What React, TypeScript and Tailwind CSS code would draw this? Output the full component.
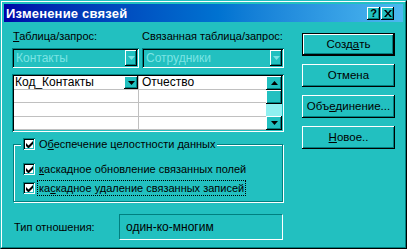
import React from 'react';

const raised =
  'shadow-[inset_-1px_-1px_0_#000,inset_1px_1px_0_#fff,inset_-2px_-2px_0_#008080,inset_2px_2px_0_#22c0c0]';
const sunken =
  'shadow-[inset_1px_1px_0_#008080,inset_-1px_-1px_0_#fff,inset_2px_2px_0_#000,inset_-2px_-2px_0_#22c0c0]';

function Arrow({ up = false, color = '#000' }: { up?: boolean; color?: string }) {
  return (
    <svg width="7" height="4" viewBox="0 0 7 4">
      <path d={up ? 'M3.5 0L7 4H0z' : 'M0 0h7L3.5 4z'} fill={color} />
    </svg>
  );
}

function Check() {
  return (
    <span className={`flex h-[12px] w-[12px] shrink-0 items-center justify-center bg-white ${sunken}`}>
      <svg width="7" height="7" viewBox="0 0 7 7">
        <path d="M0 2v3l2 2h1l4-4V0L2.5 4.5z" fill="#000" />
      </svg>
    </span>
  );
}

function Btn({ children, def = false }: { children: React.ReactNode; def?: boolean }) {
  return (
    <div className={def ? 'border border-black' : ''}>
      <div className={`flex items-center justify-center bg-[#22c0c0] ${raised} ${def ? 'h-[21px]' : 'h-[23px]'}`}>
        {children}
      </div>
    </div>
  );
}

export default function App() {
  const grid = [
    ['Код_Контакты', 'Отчество'],
    ['', ''],
    ['', ''],
    ['', ''],
  ];

  return (
    <div
      className="w-[407px] h-[249px] overflow-hidden bg-[#22c0c0] border-t border-l border-[#22c0c0] border-r border-b border-r-black border-b-black text-[11px] text-black"
      style={{ fontFamily: '"Liberation Sans", Arial, sans-serif' }}
    >
      <div className="h-full border-t border-l border-white border-r border-b border-r-[#008080] border-b-[#008080] p-[2px] flex flex-col">
        {/* title bar */}
        <div className="h-[18px] flex items-center bg-gradient-to-r from-[#0000a8] to-[#4cb8f0] pl-[2px] pr-[9px]">
          <span className="text-white font-bold text-[13px] tracking-[0.2px] leading-none">Изменение связей</span>
          <div className="ml-auto flex">
            <div className={`w-[13px] h-[13px] flex items-center justify-center bg-[#22c0c0] ${raised} text-[11px] font-bold leading-none`}>?</div>
            <div className={`ml-[1px] w-[13px] h-[13px] flex items-center justify-center bg-[#22c0c0] ${raised}`}>
              <svg width="8" height="7" viewBox="0 0 8 7">
                <path d="M0 0h2l2 2.5L6 0h2L5 3.5 8 7H6L4 4.5 2 7H0l3-3.5z" fill="#000" />
              </svg>
            </div>
          </div>
        </div>

        {/* body */}
        <div className="flex pl-[8px]">
          <div className="w-[272px] flex flex-col">
            <div className="mt-[8px] flex h-[13px] leading-[13px]">
              <span className="w-[130px] pl-[1px]"><u>Т</u>аблица/запрос:</span>
              <span>Связанная таблица/запрос:</span>
            </div>

            <div className="mt-[5px] flex h-[20px]">
              <div className={`w-[127px] flex items-center bg-[#22c0c0] ${sunken} pl-[4px] pr-[2px]`}>
                <span className="text-[#7ce4e4] text-[12px]">Контакты</span>
                <div className={`ml-auto w-[12px] h-[16px] flex items-center justify-center ${raised}`}>
                  <Arrow color="#7ce4e4" />
                </div>
              </div>
              <div className={`ml-[3px] w-[142px] flex items-center bg-[#22c0c0] ${sunken} pl-[4px] pr-[2px]`}>
                <span className="text-[#7ce4e4] text-[12px]">Сотрудники</span>
                <div className={`ml-auto w-[12px] h-[16px] flex items-center justify-center ${raised}`}>
                  <Arrow color="#7ce4e4" />
                </div>
              </div>
            </div>

            {/* grid */}
            <div className={`mt-[6px] h-[58px] p-[2px] bg-white ${sunken} flex`}>
              <div className="w-[252px] flex flex-col">
                {grid.map((r, i) => (
                  <div key={i} className="h-[14px] flex border-b border-[#c0c0c0] text-[12px] leading-[13px]">
                    <div className="w-[125px] border-r border-[#c0c0c0] flex pl-[1px]">
                      <span>{r[0]}</span>
                      {i === 0 && (
                        <div className={`ml-auto w-[14px] h-[13px] flex items-center justify-center bg-[#22c0c0] ${raised}`}>
                          <Arrow />
                        </div>
                      )}
                    </div>
                    <div className="flex-1 pl-[3px]">{r[1]}</div>
                  </div>
                ))}
              </div>
              <div className="w-[16px] flex flex-col">
                <div className={`h-[14px] flex items-center justify-center bg-[#22c0c0] ${raised}`}>
                  <Arrow up />
                </div>
                <div className={`h-[14px] bg-[#22c0c0] ${raised}`} />
                <div className="h-[12px] bg-[#90f0f0]" />
                <div className={`h-[14px] flex items-center justify-center bg-[#22c0c0] ${raised}`}>
                  <Arrow />
                </div>
              </div>
            </div>

            {/* group box */}
            <div className="mt-[12px] ml-[1px] w-[270px] h-[58px] border border-[#008080] shadow-[1px_1px_0_#fff,inset_1px_1px_0_#fff] flex flex-col text-[11px] leading-[14px]">
              <div className="-mt-[8px] ml-[7px] self-start flex items-center gap-[4px] bg-[#22c0c0] px-[2px]">
                <Check />
                <span>О<u>б</u>еспечение целостности данных</span>
              </div>
              <div className="mt-[11px] ml-[9px] flex items-center gap-[4px]">
                <Check />
                <span><u>к</u>аскадное обновление связанных полей</span>
              </div>
              <div className="mt-[4px] ml-[9px] flex items-center gap-[2px]">
                <Check />
                <span className="border border-dotted border-black px-[1px]">ка<u>с</u>кадное удаление связанных записей</span>
              </div>
            </div>

            <div className="mt-[12px] flex items-center h-[26px]">
              <span className="w-[107px] pl-[2px] text-[11px]">Тип отношения:</span>
              <div className="w-[164px] h-[26px] border-t border-l border-[#008080] border-r border-b border-r-white border-b-white flex items-center pl-[6px] text-[12px]">
                один-ко-многим
              </div>
            </div>
          </div>

          {/* buttons */}
          <div className="ml-[18px] w-[93px] mt-[11px] flex flex-col gap-[8px] text-[11.5px]">
            <Btn def>Созд<u>а</u>ть</Btn>
            <Btn>Отмена</Btn>
            <Btn>Объ<u>е</u>динение...</Btn>
            <Btn><u>Н</u>овое..</Btn>
          </div>
        </div>
      </div>
    </div>
  );
}
